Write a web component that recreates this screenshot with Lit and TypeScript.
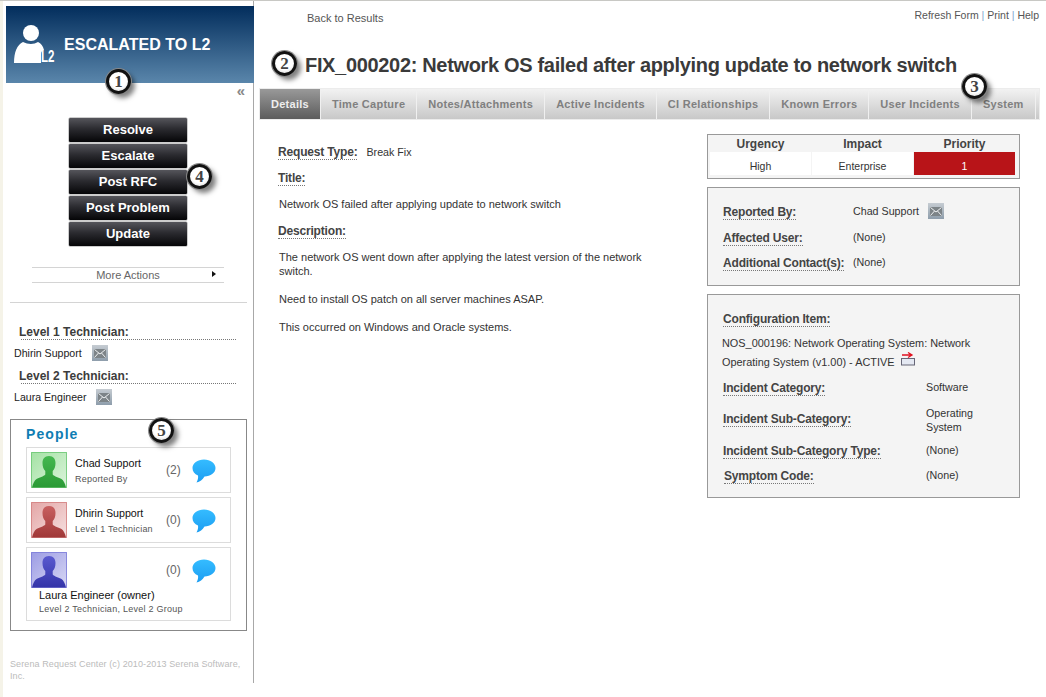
import { LitElement, html, css } from "lit";
import { customElement } from "lit/decorators.js";

const mail = html`<svg class="mail" width="16" height="16" viewBox="0 0 16 16"><rect width="16" height="16" fill="url(#mg)"/><rect x="2" y="4" width="12" height="9" fill="#7d8488"/><path d="M2.500 4.500L8 9l5.500-4.500M2.500 12.500L6.500 8M13.500 12.500L9.500 8" fill="none" stroke="#eef0f2" stroke-width="1"/></svg>`;

const badge = (n: number, cls: string) => html`<span class="badge ${cls}">${n}</span>`;

const avatar = (bg1: string, bg2: string, fg1: string, fg2: string, id: string) => html`<svg class="avatar" width="36" height="36" viewBox="0 0 36 36"><defs><linearGradient id="bg-${id}" x1="0" y1="0" x2="1" y2="1"><stop offset="0" stop-color="${bg1}"/><stop offset="1" stop-color="${bg2}"/></linearGradient><linearGradient id="fg-${id}" x1="0" y1="0" x2="0" y2="1"><stop offset="0" stop-color="${fg1}"/><stop offset="1" stop-color="${fg2}"/></linearGradient></defs><rect x=".5" y=".5" width="35" height="35" fill="url(#bg-${id})" stroke="${fg1}" stroke-opacity=".65"/><path d="M18 4c-4.500 0-6.500 3-6.500 7 0 3.500 1 6.500 2.800 8v3.500c-1.500 2-6.300 3-8.800 4.500C3.500 28.500 2 31 1 35.500h34c-1-4.500-2.500-7-4.500-8.500-2.500-1.500-7.300-2.500-8.800-4.500V19c1.800-1.500 2.800-4.500 2.800-8 0-4-2-7-6.500-7z" fill="url(#fg-${id})"/></svg>`;

const bubble = html`<svg class="bubble" width="24" height="24" viewBox="0 0 24 24"><path d="M12 .5C5.500 .5 .5 4.300 .5 9c0 3.500 2 6 5.500 7.500.4 2.500-.2 4.500-1.500 7 3.500-.5 6-3 8-6 6-.3 11-3.500 11-8.500C23.500 4.300 18.500 .5 12 .5z" fill="url(#bbl)"/></svg>`;

@customElement("app-root")
export class AppRoot extends LitElement {
  static styles = css`
    :host { display: flex; width: 1046px; height: 697px; box-sizing: border-box; border-top: 1px solid #c8c8c4; background: #fff; font-family: "Liberation Sans", Arial, sans-serif; font-size: 10px; color: #333; overflow: hidden; position: relative; }
    .defs { position: absolute; width: 0; height: 0; }
    .strip { width: 3px; background: #f5f3e8; flex: none; }
    .side { width: 251px; height: 682px; flex: none; box-sizing: border-box; border-right: 1px solid #a8a8a8; padding-top: 5px; position: relative; }
    .hero { margin-left: 3px; height: 77px; width: 248px; background: linear-gradient(#022d5c, #5a86ab); box-sizing: border-box; color: #fff; position: relative; }
    .hero h2 { margin: 0; font-size: 16px; font-weight: bold; letter-spacing: .02px; position: absolute; left: 58px; top: 30px; line-height: 18px; white-space: nowrap; }
    .hero .uicon { position: absolute; left: 8px; top: 18px; }
    .hero .l2 { position: absolute; left: 35px; top: 43px; font-size: 16px; line-height: 16px; font-weight: bold; transform: scaleX(.72); transform-origin: left; }
    .collapse { text-align: right; padding-right: 8px; height: 27px; color: #888; font-size: 15px; line-height: 15px; font-weight: bold; }
    .btns { display: flex; flex-direction: column; gap: 2px; align-items: center; margin-top: 8px; }
    .btn { width: 118px; height: 24px; box-sizing: border-box; background: linear-gradient(#55555b, #2b2b30 45%, #050507); border-radius: 1px; color: #fff; font-weight: bold; font-size: 13px; line-height: 24px; text-align: center; box-shadow: 0 0 0 .5px #999; }
    .more { margin: 21px 29px 0 29px; border-top: 1px solid #d4d4d4; border-bottom: 1px solid #d4d4d4; height: 14px; line-height: 14px; text-align: center; font-size: 11px; color: #666; position: relative; }
    .more i { position: absolute; right: 8px; top: 3px; width: 0; height: 0; border-left: 4px solid #111; border-top: 3.500px solid transparent; border-bottom: 3.500px solid transparent; }
    .hr { margin: 19px 6px 0 7px; border-top: 1px solid #d4d4d4; }
    .tech { margin: 23px 0 0 11px; }
    .tech h4 { margin: 0 17px 0 7px; text-indent: -2px; font-size: 12px; font-weight: bold; color: #3c3c3c; border-bottom: 1px dotted #777; line-height: 13px; height: 13px; }
    .tname { display: flex; align-items: center; font-size: 10.600px; height: 16px; margin-top: 5px; margin-bottom: 9px; color: #222; }
    .tname:last-child { margin-bottom: 7px; }
    .tname .mail { margin-left: 10px; }
    .people { margin: 14px 6px 0 7px; border: 1px solid #888; height: 212px; box-sizing: border-box; padding: 6px 15px; position: relative; }
    .people h3 { margin: 0 0 5px; color: #0f7db3; font-size: 14px; font-weight: bold; letter-spacing: 1.100px; line-height: 16px; }
    .card { border: 1px solid #dcdcdc; margin-bottom: 4px; height: 46px; box-sizing: border-box; padding: 4px; position: relative; color: #111; display: flex; }
    .card.tall { height: 74px; }
    .who { width: 91px; margin-left: 8px; }
    .who b { display: block; font-weight: normal; font-size: 10.700px; line-height: 13px; margin-top: 5px; white-space: nowrap; color: #111; }
    .who span { display: block; font-size: 9px; letter-spacing: .22px; line-height: 12px; margin-top: 3px; color: #555; white-space: nowrap; }
    .count { display: flex; align-items: flex-start; font-size: 12px; color: #666; line-height: 14px; margin-top: 11px; white-space: nowrap; }
    .bubble { margin-left: 11px; margin-top: -4px; }
    .tallname { position: absolute; left: 12px; top: 41px; }
    .tallname b { display: block; font-weight: normal; font-size: 11px; line-height: 13px; color: #111; white-space: nowrap; }
    .tallname span { display: block; font-size: 9px; letter-spacing: .25px; line-height: 12px; margin-top: 1px; color: #555; white-space: nowrap; }
    .foot { margin: 27px 0 0 7px; color: #bbb; font-size: 9px; line-height: 12px; letter-spacing: .1px; padding-right: 4px; }

    .main { flex: 1; position: relative; padding-left: 5px; min-width: 0; }
    .top { display: flex; justify-content: space-between; padding: 11px 7px 0 48px; height: 12px; color: #555; font-size: 11px; }
    .links { margin-top: -3px; font-size: 10.500px; }
    .links em { font-style: normal; color: #7fa9d0; }
    .ttl { margin: 0 0 0 46px; padding-top: 29px; font-size: 20px; letter-spacing: -.33px; line-height: 24px; font-weight: bold; color: #3a3a3a; white-space: nowrap; height: 24px; }
    .tabs { display: flex; margin-top: 11px; height: 32px; width: 781px; box-sizing: border-box; border: 1px solid #ececec; background: linear-gradient(#f2f2f2, #c8c8c8); font-size: 11px; font-weight: bold; color: #808080; }
    .tab { padding: 0 11px; line-height: 31px; border-right: 1px solid #f0f0f0; white-space: nowrap; letter-spacing: .27px; }
    .tab.on { background: linear-gradient(#999, #5c5c5c); color: #eee; }
    .body { display: flex; }
    .left { width: 429px; margin-left: 19px; flex: none; font-size: 11px; color: #333; padding-top: 26px; }
    .lab { font-size: 12px; letter-spacing: -.18px; font-weight: bold; color: #444; border-bottom: 1px dotted #777; line-height: 13px; display: inline-block; white-space: nowrap; }
    .row { display: flex; }
    .row .v { margin-left: 9px; font-size: 10.700px; line-height: 12px; }
    .left p { margin: 0 0 0 1px; line-height: 14px; width: 375px; }
    .gap-t { margin-top: 12px; }
    .gap-d { margin-top: 14px; }
    .left p.p1 { margin-top: 11px; }
    .left p.p2 { margin-top: 11px; }
    .left p.p3 { margin-top: 14px; }
    .right { width: 313px; margin-top: 14px; flex: none; }
    .pri { border: 1px solid #999; height: 45px; box-sizing: border-box; background: #f4f4f4; padding: 0 4px 3px 2px; display: grid; grid-template-columns: repeat(3, 1fr); grid-template-rows: 17px 23px; column-gap: 1px; text-align: center; }
    .pri .h { font-size: 12px; font-weight: bold; color: #444; line-height: 19px; height: 17px; }
    .pri .c { background: #fff; padding-top: 5px; line-height: 18px; box-sizing: border-box; font-size: 10.500px; color: #333; }
    .pri .red { background: #b81418; color: #fff; }
    .box { border: 1px solid #999; background: #f4f4f4; box-sizing: border-box; margin-top: 8px; position: relative; padding-left: 15px; }
    .b2 { height: 99px; padding-top: 15px; }
    .b3 { height: 204px; padding-top: 18px; }
    .kv { display: grid; grid-template-columns: 130px 1fr; align-items: center; color: #333; height: 16px; margin-top: 9px; }
    .b2 .kv + .kv { margin-top: 12px; }
    .b2 .kv + .kv + .kv { margin-top: 9px; }
    .kv:first-child { margin-top: 0; }
    .kv .val { display: flex; align-items: center; gap: 9px; font-size: 10.700px; margin-bottom: 4px; }
    .b3 .kv { grid-template-columns: 203px 74px; }
    .b3 .kv.two { height: 28px; margin-top: 9px; }
    .b3 .kv.two .val { display: block; line-height: 14px; margin-bottom: 0; }
    .b3 .kv.type { margin-top: 10px; }
    .b3 .kv.sym { margin-top: 9px; }
    .sym .name { padding-left: 1px; }
    .ci { font-size: 10.900px; line-height: 19px; margin: 7px 0 5px -1px; white-space: nowrap; }
    .ci svg { display: inline-block; height: 14px; margin-bottom: -3px; margin-top: -3px; margin-left: 3px; transform: translateY(-3px); }

    .badge { position: absolute; width: 19px; height: 19px; border: 3px solid #111; border-radius: 50%; background: radial-gradient(circle at 50% 40%, #fff 55%, #ccc); font-family: "Liberation Serif", serif; font-size: 17px; line-height: 19px; font-weight: bold; text-align: center; color: #444; box-shadow: 0 0 0 1px #888, 4px 4px 5px rgba(0,0,0,.5); z-index: 5; }
    .b1 { left: 106px; top: 68px; }
    .b4 { left: 187px; top: 163px; }
    .b5 { left: 149px; top: 417px; }
    .b2n { left: 272px; top: 50px; }
    .b3n { left: 962px; top: 73px; }
    .badgelayer { position: absolute; inset: 0; pointer-events: none; }
  `;

  render() {
    return html`
      <svg class="defs"><defs>
        <linearGradient id="mg" x1="0" y1="0" x2="0" y2="1"><stop offset="0" stop-color="#c6ccd2"/><stop offset="1" stop-color="#8e9dab"/></linearGradient>
        <linearGradient id="bbl" x1="0" y1="0" x2="0" y2="1"><stop offset="0" stop-color="#35bcff"/><stop offset="1" stop-color="#1b9df2"/></linearGradient>
      </defs></svg>
      <div class="strip"></div>
      <div class="side">
        <div class="hero">
          <svg class="uicon" width="32" height="39" viewBox="0 0 32 39"><circle cx="17" cy="9" r="8" fill="#fff"/><path d="M0 39c0-11 3-18 9-21 5 2.500 11 2.500 15 0 3 1.500 5 4 6 8-2 .5-3 2-3 4v9z" fill="#fff"/></svg>
          <span class="l2">L2</span>
          <h2>ESCALATED TO L2</h2>
        </div>
        <div class="collapse">«</div>
        <div class="btns">
          ${["Resolve", "Escalate", "Post RFC", "Post Problem", "Update"].map((b) => html`<div class="btn">${b}</div>`)}
        </div>
        <div class="more">More Actions<i></i></div>
        <div class="hr"></div>
        <div class="tech">
          <h4>Level 1 Technician:</h4>
          <div class="tname">Dhirin Support ${mail}</div>
          <h4>Level 2 Technician:</h4>
          <div class="tname">Laura Engineer ${mail}</div>
        </div>
        <div class="people">
          <h3>People</h3>
          <div class="card">
            ${avatar("#a4e2a4", "#dcf4dc", "#45b850", "#2a9a35", "g")}
            <div class="who"><b>Chad Support</b><span>Reported By</span></div>
            <div class="count">(2)${bubble}</div>
          </div>
          <div class="card">
            ${avatar("#e4a6a6", "#f5e0e0", "#c86060", "#a03838", "r")}
            <div class="who"><b>Dhirin Support</b><span>Level 1 Technician</span></div>
            <div class="count">(0)${bubble}</div>
          </div>
          <div class="card tall">
            ${avatar("#9c9ce4", "#d8d8f4", "#5a5ad0", "#3434a8", "b")}
            <div class="who"></div>
            <div class="count">(0)${bubble}</div>
            <div class="tallname"><b>Laura Engineer (owner)</b><span>Level 2 Technician, Level 2 Group</span></div>
          </div>
        </div>
        <div class="foot">Serena Request Center (c) 2010-2013 Serena Software, Inc.</div>
      </div>
      <div class="main">
        <div class="top"><a>Back to Results</a><span class="links">Refresh Form <em>|</em> Print <em>|</em> Help</span></div>
        <div class="ttl">FIX_000202: Network OS failed after applying update to network switch</div>
        <div class="tabs">
          ${["Details", "Time Capture", "Notes/Attachments", "Active Incidents", "CI Relationships", "Known Errors", "User Incidents", "System"].map((t, i) => html`<div class="tab ${i === 0 ? "on" : ""}">${t}</div>`)}
        </div>
        <div class="body">
          <div class="left">
            <div class="row"><span class="lab">Request Type:</span><span class="v">Break Fix</span></div>
            <div class="gap-t"><span class="lab">Title:</span></div>
            <p class="p1">Network OS failed after applying update to network switch</p>
            <div class="gap-d"><span class="lab">Description:</span></div>
            <p class="p2">The network OS went down after applying the latest version of the network switch.</p>
            <p class="p3">Need to install OS patch on all server machines ASAP.</p>
            <p class="p3">This occurred on Windows and Oracle systems.</p>
          </div>
          <div class="right">
            <div class="pri">
              <div class="h">Urgency</div><div class="h">Impact</div><div class="h">Priority</div>
              <div class="c">High</div><div class="c">Enterprise</div><div class="c red">1</div>
            </div>
            <div class="box b2">
              <div class="kv"><span><span class="lab">Reported By:</span></span><span class="val">Chad Support ${mail}</span></div>
              <div class="kv"><span><span class="lab">Affected User:</span></span><span class="val">(None)</span></div>
              <div class="kv"><span><span class="lab">Additional Contact(s):</span></span><span class="val">(None)</span></div>
            </div>
            <div class="box b3">
              <div><span class="lab">Configuration Item:</span></div>
              <div class="ci">NOS_000196: Network Operating System: Network<br />Operating System (v1.00) - ACTIVE
                <svg width="15" height="14" viewBox="0 0 15 14"><rect x=".5" y="6.500" width="13" height="6.500" fill="#e4e8f2" stroke="#667"/><path d="M1 3h9.500M7 .5l4 2.500L7 5.500" fill="none" stroke="#e01020" stroke-width="1.300"/></svg></div>
              <div class="kv"><span><span class="lab">Incident Category:</span></span><span class="val">Software</span></div>
              <div class="kv two"><span><span class="lab">Incident Sub-Category:</span></span><span class="val">Operating<br />System</span></div>
              <div class="kv type"><span><span class="lab">Incident Sub-Category Type:</span></span><span class="val">(None)</span></div>
              <div class="kv sym"><span class="name"><span class="lab">Symptom Code:</span></span><span class="val">(None)</span></div>
            </div>
          </div>
        </div>
      </div>
      <div class="badgelayer">
        ${badge(1, "b1")}${badge(4, "b4")}${badge(5, "b5")}${badge(2, "b2n")}${badge(3, "b3n")}
      </div>
    `;
  }
}
